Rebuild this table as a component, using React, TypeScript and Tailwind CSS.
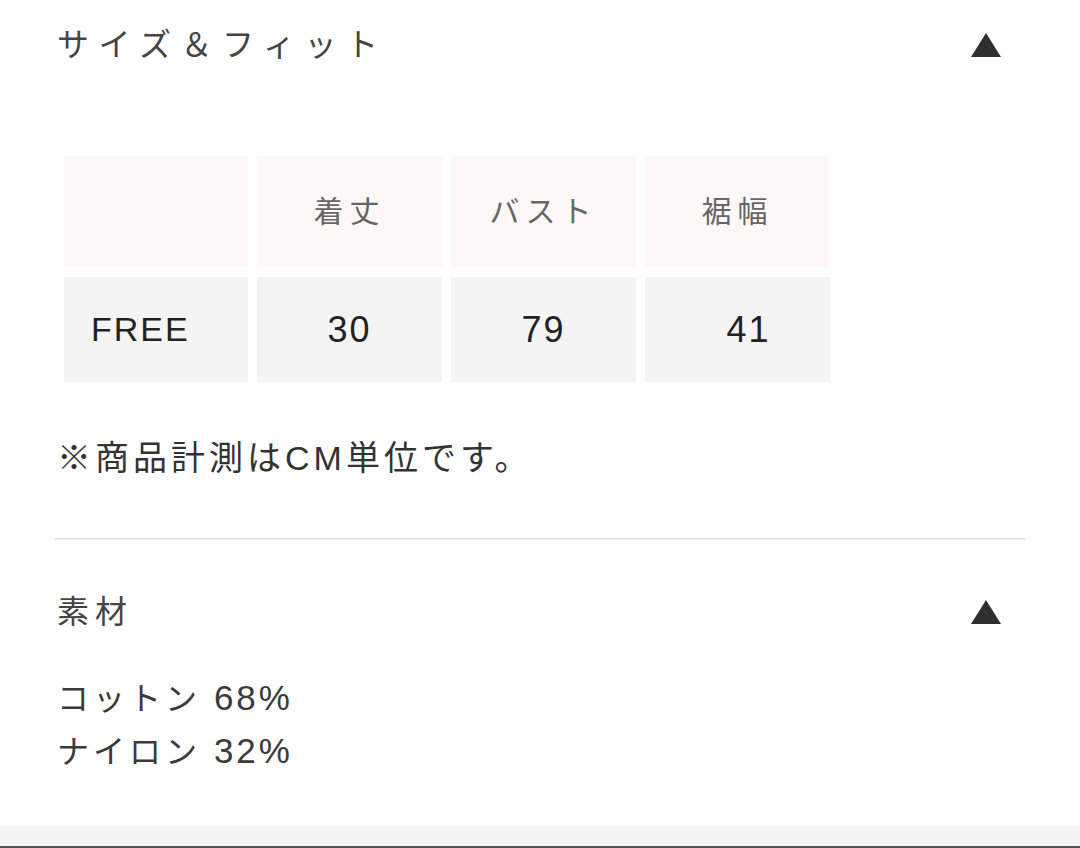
const font = { fontFamily: '"Liberation Sans", "Noto Sans CJK JP", sans-serif' };

function Triangle() {
  return (
    <svg width="32" height="26" viewBox="0 0 32 26" className="shrink-0">
      <polygon points="16,1 31,25 1,25" fill="#2f2f2f" />
    </svg>
  );
}

const heads = ["", "着丈", "バスト", "裾幅"];
const values = ["30", "79", "41"];
const materials = [
  ["コットン", "68%"],
  ["ナイロン", "32%"],
];

export default function App() {
  return (
    <div className="w-[1080px] h-[848px] bg-white flex flex-col text-[#333]" style={font}>
      <div className="h-[90px] flex items-center justify-between pl-[57px] pr-[78px]">
        <h2 className="text-[32px] tracking-[9.5px] text-[#444] font-normal">サイズ＆フィット</h2>
        <Triangle />
      </div>

      <div className="ml-[64px] mt-[66px] grid grid-cols-[184px_185px_185px_185px] gap-x-[9px] gap-y-[10px]">
        {heads.map((h, i) => (
          <div
            key={i}
            className="h-[111px] bg-[#fdf8f7] flex items-center justify-center text-[30px] tracking-[6px] text-[#666]"
          >
            {h}
          </div>
        ))}
        <div className="h-[105px] bg-[#f4f4f4] flex items-center pl-[27px] text-[34px] text-[#222] tracking-[2px]">
          FREE
        </div>
        {values.map((v, i) => (
          <div
            key={v}
            className={
              "h-[105px] bg-[#f4f4f4] flex items-center justify-center text-[36px] text-[#222] tracking-[2px] " +
              (i === 2 ? "pl-[22px]" : "")
            }
          >
            {v}
          </div>
        ))}
      </div>

      <p className="ml-[57px] mt-[50px] h-[52px] leading-[52px] text-[34px] tracking-[4px] text-[#333]">
        ※商品計測はCM単位です。
      </p>

      <div className="mx-[55px] mt-[54px] h-[2px] bg-[#e2e2e2]" />

      <div className="mt-[36px] h-[72px] flex items-center justify-between pl-[57px] pr-[78px]">
        <h2 className="text-[32px] tracking-[6px] text-[#444] font-normal">素材</h2>
        <Triangle />
      </div>

      <div className="ml-[57px] mt-[24px] text-[32px] leading-[52px] tracking-[4px] text-[#3a3a3a]">
        {materials.map(([name, pct]) => (
          <p key={name}>
            {name} <span className="text-[35px] tracking-[3px]">{pct}</span>
          </p>
        ))}
      </div>

      <div className="mt-auto h-[22px] bg-[#f3f3f3] border-b-2 border-[#555]" />
    </div>
  );
}
